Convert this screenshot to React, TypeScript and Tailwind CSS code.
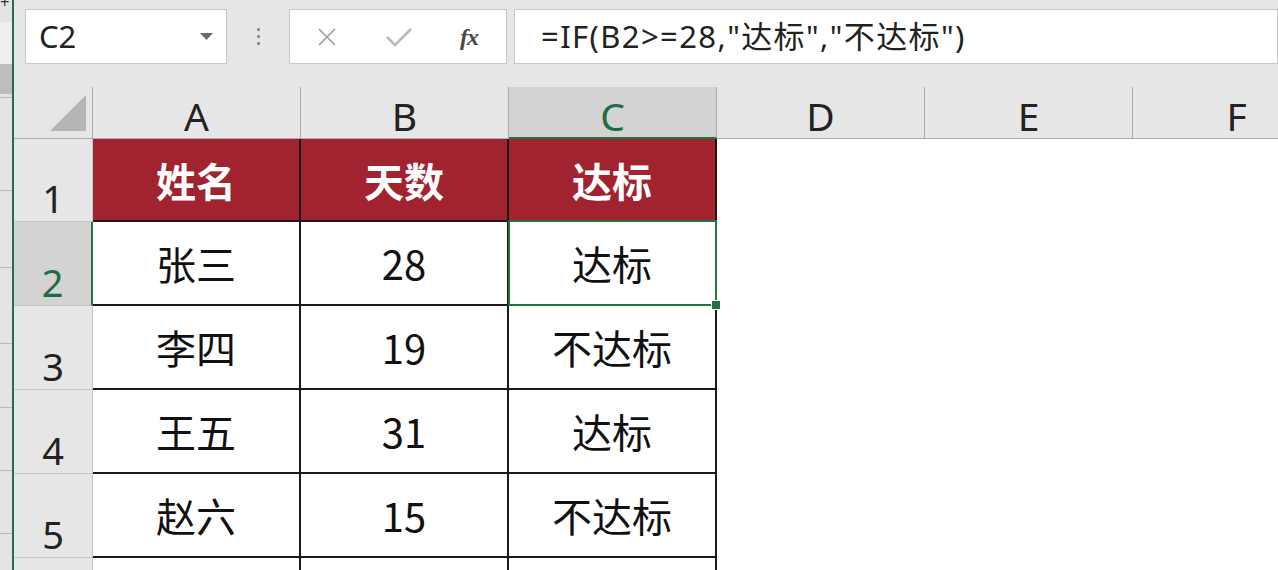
import React from "react";

const cols = ["A", "B", "C", "D", "E", "F"];
const data = [
  ["张三", "28", "达标"],
  ["李四", "19", "不达标"],
  ["王五", "31", "达标"],
  ["赵六", "15", "不达标"],
  ["", "", ""],
];

function LeftStrip() {
  return (
    <div className="relative w-[12px] h-full bg-[#e4e4e4] shrink-0">
      <div className="absolute left-0 top-[-6px] text-[16px] leading-none text-[#333] font-['Liberation_Sans',sans-serif]">+</div>
      <div className="absolute left-0 top-[22px] w-[12px] h-[44px] bg-[#eeeeee]" />
      <div className="absolute left-0 top-[64px] w-[12px] h-[30px] bg-[#bdbdbd]" />
      {[97, 190, 267, 343, 407, 470, 533].map((y) => (
        <div key={y} className="absolute left-0 w-[12px] h-px bg-[#b8b8b8]" style={{ top: y }} />
      ))}
    </div>
  );
}

function TopBar() {
  return (
    <div className="h-[87px] flex items-start pt-[9px] pl-[11px] shrink-0">
      <div className="w-[202px] h-[55px] shrink-0 bg-white border border-[#c8c8c8] flex items-center justify-between pl-[13px] pr-[13px]">
        <span className="text-[31px] text-[#222] font-['Noto_Sans',sans-serif] leading-none">C2</span>
        <svg width="13" height="7" viewBox="0 0 13 7"><path d="M0 0 L13 0 L6.5 7 Z" fill="#6a6a6a" /></svg>
      </div>
      <div className="w-[62px] h-[55px] shrink-0 flex items-center justify-center">
        <div className="flex flex-col gap-[4px]">
          <div className="w-[3px] h-[3px] rounded-full bg-[#7a7a7a]" />
          <div className="w-[3px] h-[3px] rounded-full bg-[#7a7a7a]" />
          <div className="w-[3px] h-[3px] rounded-full bg-[#7a7a7a]" />
        </div>
      </div>
      <div className="w-[218px] h-[55px] shrink-0 bg-white border border-[#c8c8c8] flex items-center">
        <svg className="ml-[27px]" width="20" height="20" viewBox="0 0 20 20">
          <path d="M2 2 L18 18 M18 2 L2 18" stroke="#9a9a9a" strokeWidth="1.6" fill="none" />
        </svg>
        <svg className="ml-[49px]" width="26" height="20" viewBox="0 0 26 20">
          <path d="M1 10 L9 18 L25 2" stroke="#b9b9b9" strokeWidth="2.6" fill="none" />
        </svg>
        <span className="ml-[48px] italic font-bold text-[24px] text-[#4a4a4a] font-['Liberation_Serif',serif] leading-none tracking-[-1px]">
          fx
        </span>
      </div>
      <div className="flex-1 ml-[7px] h-[55px] bg-white border border-[#c8c8c8] flex items-center pl-[26px]">
        <span className="text-[31px] text-[#222] font-['Noto_Sans','Noto_Sans_CJK_SC',sans-serif] leading-none tracking-[1.4px] whitespace-nowrap">
          =IF(B2&gt;=28,"达标","不达标")
        </span>
      </div>
    </div>
  );
}

function Grid() {
  return (
    <div className="grid grid-cols-[79px_208px_208px_208px_208px_208px_208px] grid-rows-[52px_83px_84px_84px_84px_84px_84px] font-['Noto_Sans','Noto_Sans_CJK_SC',sans-serif]">
      <div className="relative border-r border-b border-[#ababab] bg-[#e6e6e6]">
        <svg className="absolute left-[36px] top-[8px]" width="36" height="36" viewBox="0 0 36 36">
          <path d="M36 0 L36 36 L0 36 Z" fill="#b5b5b5" />
        </svg>
      </div>
      {cols.map((c) => {
        const sel = c === "C";
        return (
          <div
            key={c}
            className={
              sel
                ? "flex items-end justify-center pb-[0px] bg-[#d3d3d3] border-r border-[#ababab] border-b-2 border-b-[#217346] text-[#1e6b45] text-[39px] leading-none"
                : "flex items-end justify-center pb-[1px] bg-[#e6e6e6] border-r border-b border-[#ababab] text-[#222] text-[39px] leading-none"
            }
          >
            <span className="pb-[2px]">{c}</span>
          </div>
        );
      })}

      <div className="flex items-end justify-center pb-[4px] bg-[#e6e6e6] border-r border-b border-[#c6c6c6] text-[38px] leading-none text-[#222]">
        1
      </div>
      {["姓名", "天数", "达标"].map((t) => (
        <div
          key={t}
          className="flex items-center justify-center bg-[#a0232f] border-r-2 border-b-2 border-[#1a1a1a] text-white font-bold text-[40px] font-['Noto_Sans_CJK_SC',sans-serif]"
        >
          {t}
        </div>
      ))}
      <div className="bg-white" />
      <div className="bg-white" />
      <div className="bg-white" />

      {data.map((row, i) => {
        const r = i + 2;
        const selRow = r === 2;
        return (
          <React.Fragment key={r}>
            <div
              className={
                selRow
                  ? "flex items-end justify-center pb-[4px] bg-[#d3d3d3] border-r-2 border-r-[#217346] border-b border-b-[#c6c6c6] text-[38px] leading-none text-[#1e6b45]"
                  : "flex items-end justify-center pb-[4px] bg-[#e6e6e6] border-r border-b border-[#c6c6c6] text-[38px] leading-none text-[#222]"
              }
            >
              {r < 6 ? r : ""}
            </div>
            {row.map((v, j) => (
              <div
                key={j}
                className="relative flex items-center justify-center bg-white border-r-2 border-b-2 border-[#1a1a1a] text-[40px] text-[#111] font-['Noto_Sans_CJK_SC',sans-serif]"
              >
                {v}
                {selRow && j === 2 && (
                  <div className="absolute top-[-2px] left-[-1px] right-[-2px] bottom-[-2px] border-2 border-[#217346] z-10">
                    <div className="absolute right-[-6px] bottom-[-6px] w-[10px] h-[10px] bg-[#217346] border border-white" />
                  </div>
                )}
              </div>
            ))}
            <div className="bg-white" />
            <div className="bg-white" />
            <div className="bg-white" />
          </React.Fragment>
        );
      })}
    </div>
  );
}

export default function App() {
  return (
    <div className="flex w-[1278px] h-[570px] overflow-hidden bg-[#e6e6e6]">
      <LeftStrip />
      <div className="w-[2px] h-full bg-[#2a6b4c] shrink-0" />
      <div className="flex-1 flex flex-col min-w-0 overflow-hidden">
        <TopBar />
        <Grid />
      </div>
    </div>
  );
}
